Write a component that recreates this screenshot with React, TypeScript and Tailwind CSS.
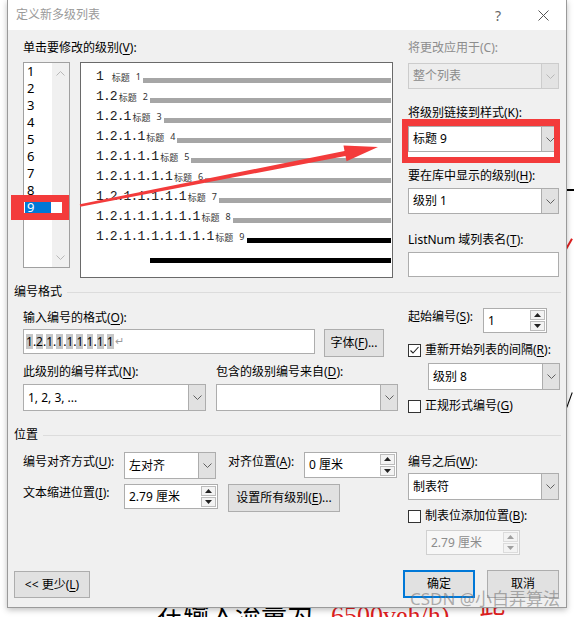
import React from "react";

const U = ({ c }: { c: string }) => (
  <span className="underline underline-offset-[2px] decoration-1">{c}</span>
);

function Chevron({ disabled, up }: { disabled?: boolean; up?: boolean }) {
  return (
    <svg width="9" height="5" viewBox="0 0 9 5">
      <polyline
        points={up ? "0.5,4.5 4.5,0.5 8.5,4.5" : "0.5,0.5 4.5,4.5 8.5,0.5"}
        fill="none"
        stroke={disabled ? "#b8b8b8" : "#606060"}
        strokeWidth="1"
      />
    </svg>
  );
}

function Tri({ up, disabled }: { up?: boolean; disabled?: boolean }) {
  return (
    <svg width="7" height="4" viewBox="0 0 7 4">
      <polygon points={up ? "0,4 3.5,0 7,4" : "0,0 3.5,4 7,0"} fill={disabled ? "#a0a0a0" : "#222"} />
    </svg>
  );
}

function Label({ children, className = "" }: { children: React.ReactNode; className?: string }) {
  return <div className={`text-[12px] leading-[16px] h-[16px] whitespace-nowrap ${className}`}>{children}</div>;
}

function Combo({ text, className = "", disabled }: { text: string; className?: string; disabled?: boolean }) {
  return (
    <div className={`flex border ${disabled ? "border-[#cccccc] bg-[#ededed]" : "border-[#adadad] bg-white"} ${className}`}>
      <div className={`flex-1 flex items-center pl-[4px] text-[12px] whitespace-nowrap ${disabled ? "text-[#8a8a8a]" : "text-black"}`}>
        {text}
      </div>
      <div
        className={`w-[17px] flex items-center justify-center border-l ${
          disabled ? "border-[#cccccc] bg-[#e3e3e3]" : "border-[#adadad] bg-[#e1e1e1]"
        }`}
      >
        <Chevron disabled={disabled} />
      </div>
    </div>
  );
}

function Spin({ text, className = "", disabled }: { text: string; className?: string; disabled?: boolean }) {
  return (
    <div className={`flex border ${disabled ? "border-[#d0d0d0] bg-[#f7f7f7]" : "border-[#adadad] bg-white"} ${className}`}>
      <div className={`flex-1 flex items-center pl-[4px] text-[12px] whitespace-nowrap ${disabled ? "text-[#8c8c8c]" : "text-black"}`}>
        {text}
      </div>
      <div className="w-[17px] flex flex-col gap-[1px] p-[1px]">
        <div className={`flex-1 flex items-center justify-center border ${disabled ? "border-[#dcdcdc]" : "border-[#bcbcbc]"} bg-[#f3f3f3]`}>
          <Tri up disabled={disabled} />
        </div>
        <div className={`flex-1 flex items-center justify-center border ${disabled ? "border-[#dcdcdc]" : "border-[#bcbcbc]"} bg-[#f3f3f3]`}>
          <Tri disabled={disabled} />
        </div>
      </div>
    </div>
  );
}

function Check({ checked }: { checked?: boolean }) {
  return (
    <div className="w-[13px] h-[13px] border border-[#333333] bg-white flex items-center justify-center shrink-0">
      {checked && (
        <svg width="11" height="11" viewBox="0 0 11 11">
          <polyline points="1.5,5.5 4,8 9.5,2" fill="none" stroke="#222" strokeWidth="1.1" />
        </svg>
      )}
    </div>
  );
}

function Btn({ children, className = "", primary }: { children: React.ReactNode; className?: string; primary?: boolean }) {
  return (
    <div
      className={`flex items-center justify-center bg-[#e1e1e1] text-[12px] whitespace-nowrap ${
        primary ? "border-2 border-[#0078d7]" : "border border-[#adadad]"
      } ${className}`}
    >
      {children}
    </div>
  );
}

function Section({ title, className = "" }: { title: string; className?: string }) {
  return (
    <div className={`flex items-center h-[16px] ${className}`}>
      <span className="text-[12px] leading-[16px]">{title}</span>
      <div className="flex-1 h-px bg-[#dcdcdc] ml-[5px] mr-[5px]" />
    </div>
  );
}

const previewRows = [
  "1 ",
  "1.2",
  "1.2.1",
  "1.2.1.1",
  "1.2.1.1.1",
  "1.2.1.1.1.1",
  "1.2.1.1.1.1.1",
  "1.2.1.1.1.1.1.1",
  "1.2.1.1.1.1.1.1.1",
];

function LevelList() {
  return (
    <div className="w-[47px] h-[206px] border border-[#a0a0a0] bg-white flex">
      <div className="flex-1">
        {[1, 2, 3, 4, 5, 6, 7, 8, 9].map((n) => (
          <div
            key={n}
            className={`h-[17px] mx-[1px] pl-[2px] flex items-center text-[13px] ${
              n === 9 ? "bg-[#0078d7] text-white" : "text-black"
            }`}
          >
            {n}
          </div>
        ))}
      </div>
      <div className="w-[17px] bg-[#f0f0f0] flex flex-col items-center justify-between pt-[8px] pb-[7px]">
        <Chevron up disabled />
        <Chevron disabled />
      </div>
    </div>
  );
}

function Preview() {
  return (
    <div className="ml-[10px] w-[313px] h-[216px] border border-[#6a6a6a] bg-white pt-[4px] pl-[15px] pr-[1px]">
      {previewRows.map((r, i) => (
        <div key={i} className="flex items-start h-[20px]">
          <span className="font-['Liberation_Mono',monospace] text-[13px] tracking-[-0.9px] leading-[20px] text-[#222222] whitespace-pre">
            {r}
          </span>
          <span className="ml-[2px] text-[9px] leading-[21px] text-[#333333] whitespace-nowrap">标题</span>
          <span className="ml-[6px] text-[9px] leading-[20px] text-[#333333]">{i + 1}</span>
          <div className={`flex-1 ml-[2px] mt-[11px] h-[5px] ${i === 8 ? "bg-black" : "bg-[#a6a6a6]"}`} />
        </div>
      ))}
      <div className="flex h-[20px]">
        <div className="flex-1 ml-[54px] mt-[11px] h-[5px] bg-black" />
      </div>
    </div>
  );
}

function FormatInput() {
  const parts = "1.2.1.1.1.1.1.1.1".split("");
  return (
    <div className="w-[292px] h-[25px] border border-[#adadad] bg-white flex items-center pl-[2px] text-[12px]">
      {parts.map((p, i) =>
        p === "." ? (
          <span key={i}>.</span>
        ) : (
          <span key={i} className="bg-[#c6c6c6] leading-[15px]">
            {p}
          </span>
        )
      )}
      <span className="text-[#9a9a9a] text-[11px] ml-[1px]">↵</span>
    </div>
  );
}

export default function App() {
  return (
    <div className="relative w-[574px] h-[617px] bg-white overflow-hidden font-['Noto_Sans','Noto_Sans_CJK_SC',sans-serif] text-black">
      {/* background document fragments */}
      <div className="absolute left-[562px] top-[189px] w-[12px] h-[2px] bg-black" />
      <div className="absolute left-[568px] top-[238px] w-[2px] h-[12px] bg-[#e02020] rotate-[30deg]" />
      <div className="absolute left-[566px] top-[388px] w-[1px] h-[62px] bg-black" />
      <div className="absolute left-[569px] top-[392px] w-[1px] h-[16px] bg-black rotate-[20deg]" />
      <div className="absolute left-[157px] top-[601px] flex items-start text-[26px] leading-[30px] font-['Liberation_Serif','Noto_Sans_CJK_SC',serif] whitespace-nowrap">
        <span className="text-black">在输入流量为</span>
        <span className="ml-[18px] text-[#e02020]">6500veh/h)</span>
        <span className="ml-[30px] text-[#e02020]">些</span>
      </div>

      {/* dialog */}
      <div className="absolute left-[7px] top-0 w-[560px] h-[608px] border border-t-0 border-[#9a9a9a] shadow-[0_2px_6px_rgba(0,0,0,0.25)] flex flex-col">
        {/* title bar */}
        <div className="h-[30px] bg-white flex items-center pl-[8px] shrink-0">
          <span className="text-[12px] text-[#9a9a9a]">定义新多级列表</span>
          <span className="ml-auto w-[10px] text-center text-[14px] text-[#666666]">?</span>
          <svg className="ml-[35px] mr-[17px]" width="11" height="11" viewBox="0 0 11 11">
            <line x1="0.5" y1="0.5" x2="10.5" y2="10.5" stroke="#555" strokeWidth="1" />
            <line x1="10.5" y1="0.5" x2="0.5" y2="10.5" stroke="#555" strokeWidth="1" />
          </svg>
        </div>

        {/* body */}
        <div className="flex-1 bg-[#f0f0f0] flex flex-col pl-[6px] pt-[10px] pb-[9px]">
          {/* top area */}
          <div className="flex">
            <div className="ml-[9px] w-[370px]">
              <Label>
                单击要修改的级别(<U c="V" />):
              </Label>
              <div className="mt-[6px] flex items-start">
                <LevelList />
                <Preview />
              </div>
            </div>
            <div className="ml-[15px] w-[151px]">
              <Label className="text-[#8d8d8d]">将更改应用于(C):</Label>
              <Combo disabled text="整个列表" className="mt-[7px] h-[26px]" />
              <Label className="mt-[16px]">
                将级别链接到样式(<U c="K" />):
              </Label>
              <Combo text="标题 9" className="mt-[5px] h-[26px]" />
              <Label className="mt-[16px]">
                要在库中显示的级别(<U c="H" />):
              </Label>
              <Combo text="级别 1" className="mt-[4px] h-[26px]" />
              <Label className="mt-[18px]">
                ListNum 域列表名(<U c="T" />):
              </Label>
              <div className="mt-[4px] h-[25px] border border-[#adadad] bg-white" />
            </div>
          </div>

          {/* number format */}
          <Section title="编号格式" className="mt-[6px]" />
          <div className="flex">
            <div className="ml-[9px] w-[375px]">
              <Label className="mt-[10px]">
                输入编号的格式(<U c="O" />):
              </Label>
              <div className="mt-[3px] flex items-start">
                <FormatInput />
                <Btn className="ml-[9px] w-[60px] h-[28px]">
                  字体(<U c="F" />)...
                </Btn>
              </div>
              <div className="mt-[7px] flex">
                <Label className="w-[193px]">
                  此级别的编号样式(<U c="N" />):
                </Label>
                <Label>
                  包含的级别编号来自(<U c="D" />):
                </Label>
              </div>
              <div className="mt-[4px] flex">
                <Combo text="1, 2, 3, ..." className="w-[183px] h-[27px]" />
                <Combo text="" className="ml-[10px] w-[182px] h-[27px]" />
              </div>
            </div>
            <div className="ml-[10px] w-[152px]">
              <div className="mt-[8px] flex items-start">
                <Label className="w-[75px] mt-[1px]">
                  起始编号(<U c="S" />):
                </Label>
                <Spin text="1" className="w-[64px] h-[25px]" />
              </div>
              <div className="mt-[9px] flex items-center h-[16px]">
                <Check checked />
                <span className="ml-[4px] text-[12px] whitespace-nowrap">
                  重新开始列表的间隔(<U c="R" />):
                </span>
              </div>
              <Combo text="级别 8" className="mt-[5px] ml-[20px] w-[132px] h-[27px]" />
              <div className="mt-[8px] flex items-center h-[16px]">
                <Check />
                <span className="ml-[4px] text-[12px] whitespace-nowrap">
                  正规形式编号(<U c="G" />)
                </span>
              </div>
            </div>
          </div>

          {/* position */}
          <Section title="位置" className="mt-[13px]" />
          <div className="flex">
            <div className="ml-[9px] w-[375px]">
              <div className="mt-[9px] flex items-start">
                <Label className="w-[101px] mt-[2px]">
                  编号对齐方式(<U c="U" />):
                </Label>
                <Combo text="左对齐" className="w-[92px] h-[27px]" />
                <Label className="ml-[12px] w-[76px] mt-[2px]">
                  对齐位置(<U c="A" />):
                </Label>
                <Spin text="0 厘米" className="w-[93px] h-[26px]" />
              </div>
              <div className="mt-[5px] flex items-start">
                <Label className="w-[101px] mt-[1px]">
                  文本缩进位置(<U c="I" />):
                </Label>
                <Spin text="2.79 厘米" className="w-[94px] h-[25px]" />
                <Btn className="ml-[10px] w-[112px] h-[28px]">
                  设置所有级别(<U c="E" />)...
                </Btn>
              </div>
            </div>
            <div className="ml-[10px] w-[152px]">
              <Label className="mt-[11px]">
                编号之后(<U c="W" />):
              </Label>
              <Combo text="制表符" className="mt-[3px] w-[151px] h-[27px]" />
              <div className="mt-[8px] flex items-center h-[16px]">
                <Check />
                <span className="ml-[4px] text-[12px] whitespace-nowrap">
                  制表位添加位置(<U c="B" />):
                </span>
              </div>
              <Spin disabled text="2.79 厘米" className="mt-[6px] ml-[18px] w-[94px] h-[25px]" />
            </div>
          </div>

          {/* bottom buttons */}
          <div className="mt-auto flex items-end">
            <Btn className="w-[76px] h-[27px]">
              &lt;&lt; 更少(<U c="L" />)
            </Btn>
            <div className="ml-auto mr-[7px] flex gap-[12px]">
              <Btn primary className="w-[72px] h-[28px]">
                确定
              </Btn>
              <Btn className="w-[72px] h-[28px]">取消</Btn>
            </div>
          </div>
        </div>
      </div>

      {/* annotations */}
      <div className="absolute left-[11px] top-[195px] w-[58px] h-[25px] border-[7px] border-l-[13px] border-[#f33b3b]">
        <div className="absolute right-0 top-0 bottom-0 w-[10px] bg-white" />
      </div>
      <div className="absolute left-[402px] top-[119px] w-[158px] h-[44px] border-[6px] border-t-[7px] border-[#f33b3b]">
        <div className="absolute left-0 right-0 bottom-0 h-[5px] bg-white" />
      </div>
      <svg className="absolute left-0 top-0 pointer-events-none" width="574" height="617" viewBox="0 0 574 617">
        <polygon
          points="79.8,204.3 344.5,150.9 343.5,145.6 378,147 346.5,161.2 345.5,155.9 80.2,206.7"
          fill="#f33b3b"
        />
      </svg>

      {/* watermark */}
      <div className="absolute left-[410px] top-[589px] text-[17px] leading-[20px] text-[rgba(110,110,110,0.55)] whitespace-nowrap pointer-events-none">
        CSDN @小白弄算法
      </div>
    </div>
  );
}
